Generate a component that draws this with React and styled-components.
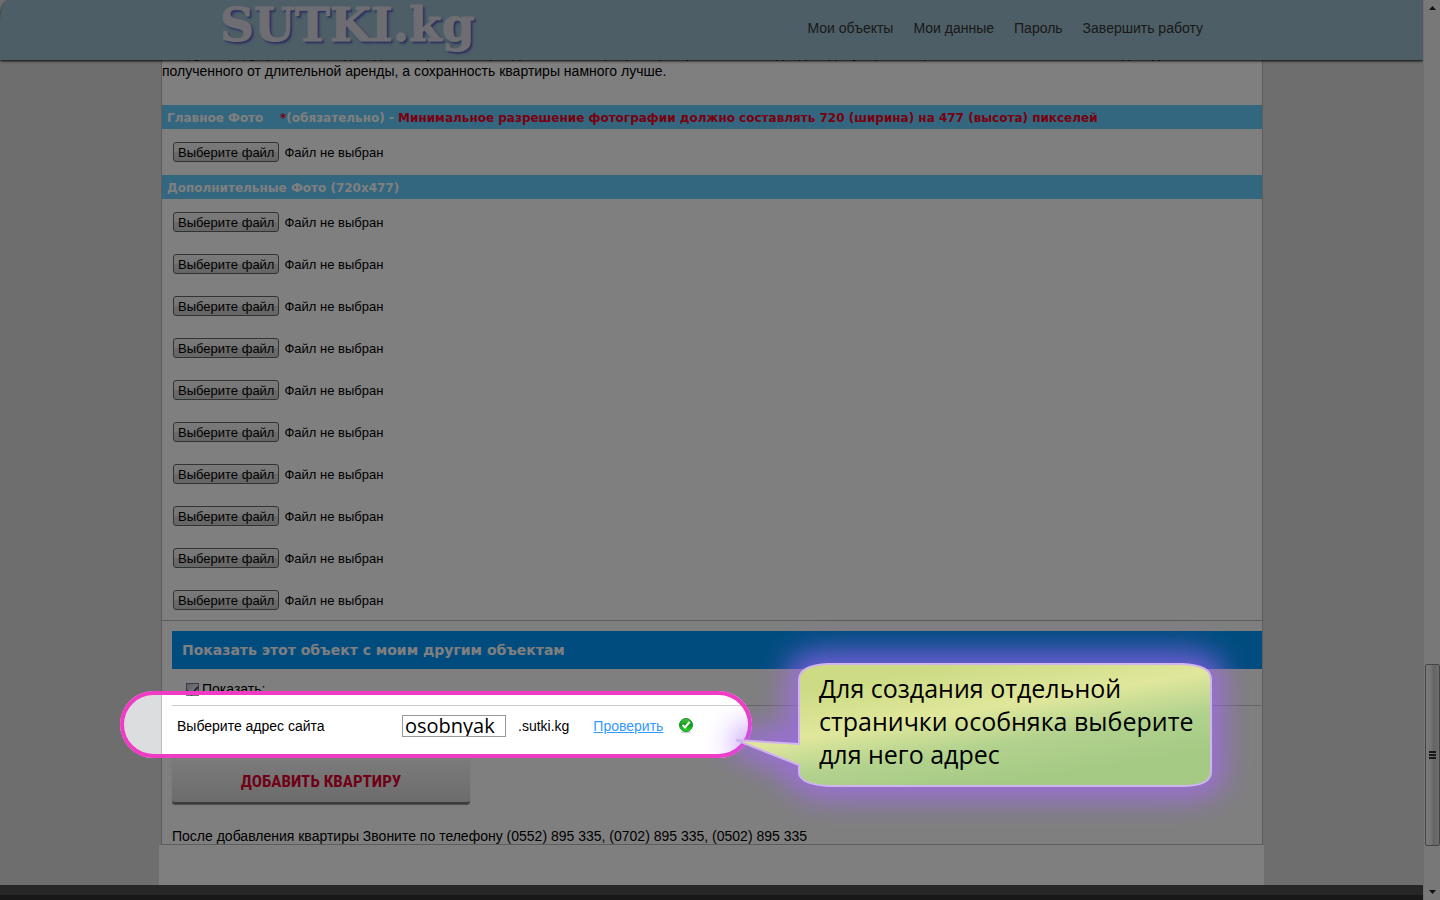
import React from "react";
import styled, { createGlobalStyle } from "styled-components";

const GlobalStyle = createGlobalStyle`
  * { box-sizing: border-box; }
  body { margin: 0; background: #dcddde; font: 14px/18px "Liberation Sans", Arial, sans-serif; color: #000; }
`;

const Window = styled.div`
  display: flex;
  height: 100vh;
  overflow: hidden;
`;

const View = styled.div`
  flex: 1;
  min-width: 0;
  display: flex;
  flex-direction: column;
`;

const Header = styled.header`
  flex: none;
  height: 60px;
  background: #9abccc;
  box-shadow: 0 1px 3px #000;
  border-top-left-radius: 10px 20px;
  z-index: 1;
`;

const HeaderInner = styled.div`
  max-width: 1105px;
  height: 100%;
  margin: 0 auto;
  padding: 0 61px;
  display: flex;
  justify-content: space-between;
`;

const Logo = styled.a`
  font: bold 47px/50px "DejaVu Serif", serif;
  color: #dcdce4;
  text-decoration: none;
  -webkit-text-stroke: 1px #dcdce4;
  text-shadow: 2px 2px 1px #5a6cc0, 2px 2px 3px #5a6cc0;
`;

const Nav = styled.nav`
  display: flex;
  gap: 20px;
  align-items: center;
  padding-bottom: 4px;
`;

const NavLink = styled.a`
  color: #333;
  text-decoration: none;
`;

const Content = styled.main`
  flex: 1;
  width: 100%;
  max-width: 1105px;
  margin: 0 auto;
  display: flex;
  flex-direction: column;
`;

const Panel = styled.form`
  margin: 0 1px 0 2px;
  border: 1px solid #bbb;
  border-top: 0;
  background: #fff;
`;

const Article = styled.div`
  height: 45px;
  padding-bottom: 25px;
  display: flex;
  flex-direction: column;
  justify-content: flex-end;
  overflow: hidden;
`;

const Line = styled.p`
  margin: 0;
  white-space: nowrap;
`;

const Band = styled.h2`
  margin: 0;
  height: 24px;
  padding: 1px 5px 0;
  background: #66cdff;
  color: #fff;
  font: bold 12px/24px "DejaVu Sans", Verdana, sans-serif;
  white-space: pre;
`;

const Warn = styled.span`
  color: #f00020;
`;

const Files = styled.div`
  padding: 2px 11px;
  ${(p) => p.$list && "height: 422px; border-bottom: 1px solid #bbb;"}
`;

const FileLabel = styled.label`
  display: flex;
  align-items: center;
  gap: 5px;
  height: 42px;
  font-size: 13px;
  position: relative;
`;

const FileInput = styled.input`
  position: absolute;
  width: 1px;
  height: 1px;
  opacity: 0;
`;

const FileButton = styled.span`
  height: 20px;
  padding: 0 4px;
  border: 1px solid #666;
  border-radius: 3px;
  background: linear-gradient(#f4f4f4, #ebebeb 50%, #d6d6d6 51%, #ccc);
  line-height: 19px;
`;

const FileStatus = styled.span`
  line-height: 16px;
  padding-top: 2px;
`;

const Section = styled.section`
  padding: 10px 0 0 10px;
`;

const SectionTitle = styled.h2`
  margin: 0;
  padding: 0 10px;
  background: #0099ff;
  color: #fff;
  font: bold 14px/38px "DejaVu Sans", Verdana, sans-serif;
`;

const ShowLabel = styled.label`
  display: flex;
  align-items: center;
  gap: 3px;
  height: 36px;
  padding: 4px 14px 0;
`;

const Check = styled.input`
  width: 13px;
  height: 13px;
  margin: 0;
  appearance: none;
  border: 1px solid #777;
  background: linear-gradient(135deg, #b8c0d0, #fff);
  display: grid;
  place-items: center;
  &:checked::after {
    content: "";
    width: 5px;
    height: 9px;
    margin-bottom: 3px;
    border: solid #33468c;
    border-width: 0 2px 2px 0;
    transform: rotate(40deg);
  }
`;

const AddressRow = styled.div`
  position: relative;
  display: flex;
  align-items: center;
  height: 49px;
  padding: 0 5px 9px;
  border-top: 1px solid #ccc;
`;

const Spotlight = styled.div`
  position: absolute;
  left: -52px;
  top: -15px;
  width: 632px;
  height: 67px;
  border: 4px solid #f03cc4;
  border-radius: 34px;
  box-shadow: 0 0 0 2000px rgba(0, 0, 0, 0.5);
  pointer-events: none;
  z-index: 2;
`;

const AddressLabel = styled.label`
  width: 225px;
`;

const AddressInput = styled.input`
  width: 104px;
  height: 22px;
  margin-right: 12px;
  padding: 0 2px;
  border: 1px solid #999;
  font: 20px/20px "Open Sans", "Noto Sans", sans-serif;
`;

const CheckLink = styled.a`
  margin: 0 16px 0 24px;
  color: #3399ff;
`;

const Callout = styled.aside`
  position: absolute;
  left: 564px;
  top: -43px;
  width: 476px;
  height: 124px;
  padding: 9px 0 0 83px;
  z-index: 3;
  font: 25px/33px "Open Sans", "Noto Sans", sans-serif;
  white-space: nowrap;
`;

const CalloutShape = styled.svg`
  position: absolute;
  inset: 0;
  width: 476px;
  height: 124px;
  overflow: visible;
  z-index: -1;
`;

const Submit = styled.button`
  display: block;
  width: 298px;
  height: 50px;
  padding: 4px 0 0;
  border: 0;
  border-bottom: 2px solid #777;
  border-radius: 3px;
  background: linear-gradient(#fafafa, #d8d8d8);
  box-shadow: 0 1px 1px #999;
  color: #e00030;
  font: bold 17px/46px "Liberation Sans Narrow", "Roboto Condensed", sans-serif;
  text-align: center;
`;

const Phone = styled.p`
  margin: 24px 0 0;
  line-height: 16px;
`;

const Below = styled.div`
  flex: 1;
  background: #fff;
`;

const Footer = styled.footer`
  flex: none;
  height: 15px;
  border-top: 10px solid #4e4e4e;
  background: #303030;
`;

const ScrollTrack = styled.div`
  flex: none;
  width: 17px;
  padding: 6px 0 6px 1px;
  border-left: 1px solid #ddd;
  background: #f0f0f0;
  display: flex;
  flex-direction: column;
  align-items: center;
  z-index: 1;
`;

const ScrollThumb = styled.div`
  width: 15px;
  height: 182px;
  margin: auto 0 44px;
  border: 1px solid #888;
  border-radius: 2px;
  background: linear-gradient(90deg, #f4f4f4, #e4e4e4 45%, #c8c8cc 55%, #dcdce0);
  display: grid;
  place-items: center;
`;

function FileRow({ id }) {
  return (
    <FileLabel htmlFor={id}>
      <FileInput type="file" id={id} />
      <FileButton>Выберите файл</FileButton>
      <FileStatus>Файл не выбран</FileStatus>
    </FileLabel>
  );
}

const links = ["Мои объекты", "Мои данные", "Пароль", "Завершить работу"];

const bubble =
  "M92 1 H446 Q475 2 475 16 V110 Q474 123 446 123 H92 Q64 121 63 110 V102 L0 77 L63 81 V16 Q64 2 92 1Z";

export default function App() {
  return (
    <Window>
      <GlobalStyle />
      <View>
        <Header>
          <HeaderInner>
            <Logo href="#">SUTKI.kg</Logo>
            <Nav>
              {links.map((l) => (
                <NavLink href="#" key={l}>{l}</NavLink>
              ))}
            </Nav>
          </HeaderInner>
        </Header>
        <Content>
          <Panel onSubmit={(e) => e.preventDefault()}>
            <Article>
              <Line>Следует предупредить, что доход от посуточной аренды Вашей квартиры, при правильном подходе к делу и размещении на сайте, намного выше дохода,</Line>
              <Line>полученного от длительной аренды, а сохранность квартиры намного лучше.</Line>
            </Article>
            <Band>
              Главное Фото{"    "}<Warn>*</Warn>(обязательно) - <Warn>Минимальное разрешение фотографии должно составлять 720 (ширина) на 477 (высота) пикселей</Warn>
            </Band>
            <Files>
              <FileRow id="main-photo" />
            </Files>
            <Band>Дополнительные Фото (720x477)</Band>
            <Files $list>
              {Array.from({ length: 10 }, (_, i) => (
                <FileRow key={i} id={`photo-${i}`} />
              ))}
            </Files>
            <Section>
              <SectionTitle>Показать этот объект с моим другим объектам</SectionTitle>
              <ShowLabel>
                <Check type="checkbox" defaultChecked />
                Показать:
              </ShowLabel>
              <AddressRow>
                <AddressLabel htmlFor="address">Выберите адрес сайта</AddressLabel>
                <AddressInput id="address" defaultValue="osobnyak" />
                <span>.sutki.kg</span>
                <CheckLink href="#">Проверить</CheckLink>
                <svg width="14" height="16" viewBox="0 0 14 16">
                  <defs>
                    <linearGradient id="ok" x1="0" y1="0" x2="0" y2="1">
                      <stop offset="0" stopColor="#4fc04f" />
                      <stop offset=".5" stopColor="#109a18" />
                      <stop offset="1" stopColor="#22e022" />
                    </linearGradient>
                  </defs>
                  <ellipse cx="7" cy="14" rx="5" ry="1" fill="#ccc" />
                  <circle cx="7" cy="7" r="6.5" fill="url(#ok)" stroke="#1c8f2c" />
                  <path d="M3.500 7 L6 9.500 L10.500 4" fill="none" stroke="#fff" strokeWidth="2" />
                </svg>
                <Spotlight />
                <Callout>
                  <CalloutShape viewBox="0 0 476 124">
                    <defs>
                      <linearGradient id="bubble" gradientUnits="userSpaceOnUse" x1="230" y1="0" x2="250" y2="124">
                        <stop offset="0" stopColor="#ccdb84" />
                        <stop offset=".38" stopColor="#e0e79c" />
                        <stop offset=".68" stopColor="#b2d28e" />
                        <stop offset="1" stopColor="#a4ca84" />
                      </linearGradient>
                      <filter id="glow" x="-20%" y="-60%" width="140%" height="220%">
                        <feGaussianBlur stdDeviation="14" />
                      </filter>
                    </defs>
                    <path d={bubble} fill="#a868ff" stroke="#a868ff" strokeWidth="28" opacity=".65" filter="url(#glow)" />
                    <path d={bubble} fill="url(#bubble)" stroke="#d0b4f0" strokeWidth="2" />
                  </CalloutShape>
                  Для создания отдельной<br />странички особняка выберите<br />для него адрес
                </Callout>
              </AddressRow>
              <Submit type="submit">ДОБАВИТЬ КВАРТИРУ</Submit>
              <Phone>После добавления квартиры Звоните по телефону (0552) 895 335, (0702) 895 335, (0502) 895 335</Phone>
            </Section>
          </Panel>
          <Below />
        </Content>
        <Footer />
      </View>
      <ScrollTrack>
        <svg width="7" height="4" viewBox="0 0 7 4"><path d="M0 4 L3.500 0 L7 4Z" fill="#222" /></svg>
        <ScrollThumb>
          <svg width="7" height="8" viewBox="0 0 7 8"><path d="M0 1H7M0 4H7M0 7H7" stroke="#333" strokeWidth="2" /></svg>
        </ScrollThumb>
        <svg width="7" height="4" viewBox="0 0 7 4"><path d="M0 0 L3.500 4 L7 0Z" fill="#222" /></svg>
      </ScrollTrack>
    </Window>
  );
}
